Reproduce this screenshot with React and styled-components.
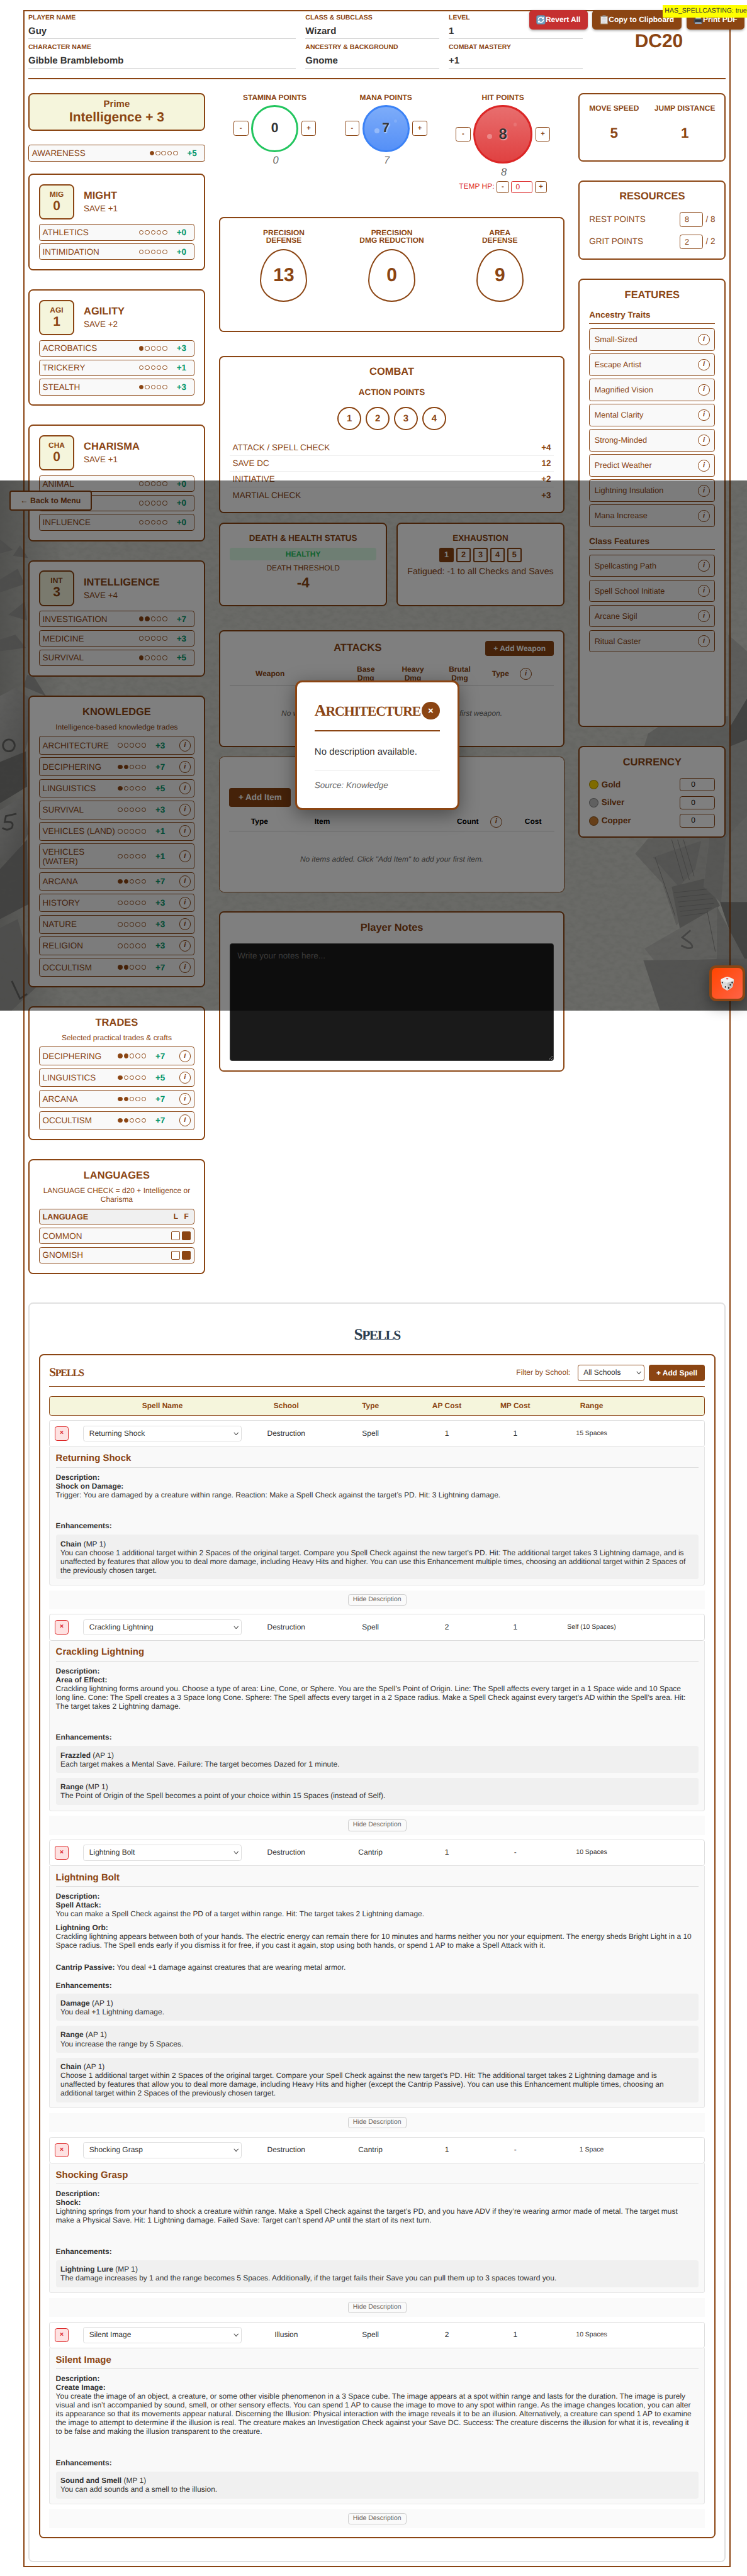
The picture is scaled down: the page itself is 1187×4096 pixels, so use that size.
import React from "react";
import styled, { createGlobalStyle, css } from "styled-components";

const BROWN = "#8b4513";
const B2 = "2.14px";

const Global = createGlobalStyle`
  html, body { margin: 0; padding: 0; background: #fff; }
  *, *::before, *::after { box-sizing: border-box; }
`;

const Page = styled.div`
  position: relative;
  isolation: isolate;
  width: 1268px;
  height: 4374px;
  overflow: hidden;
  zoom: 0.93625;
  font-family: "Liberation Sans", Arial, Helvetica, sans-serif;
  color: ${BROWN};
  font-size: 14.4px;
  line-height: 17px;
  text-rendering: geometricPrecision;
  button, textarea { text-rendering: geometricPrecision; }
`;

const Frame = styled.main`
  position: relative;
  width: 1200px;
  height: 4342.5px;
  margin: 17.4px 0 0 40px;
  padding: 5px 6px 6px;
  border: ${B2} solid ${BROWN};
`;

/* ---------- header ---------- */
const Header = styled.header`
  display: grid;
  grid-template-columns: 2fr 1fr 1fr 1fr;
  gap: 16px;
  height: 109.6px;
  padding-bottom: 15.5px;
  border-bottom: ${B2} solid ${BROWN};
`;
const FieldStack = styled.div`
  display: flex;
  flex-direction: column;
  gap: 8px;
`;
const Field = styled.div`
  height: 42px;
  border-bottom: 1px solid #ccc;
`;
const FieldLabel = styled.div`
  font-size: 11.2px;
  font-weight: 700;
  line-height: 13px;
  margin-bottom: 4px;
`;
const FieldValue = styled.div`
  font-size: 16px;
  font-weight: 700;
  line-height: 24px;
  color: #333;
`;
const Brand = styled.div`
  display: flex;
  align-items: center;
  justify-content: center;
  font-size: 32px;
  font-weight: 700;
`;

/* ---------- shared ---------- */
const Columns = styled.div`
  display: flex;
  align-items: flex-start;
  gap: 24px;
  height: 2005.7px;
  margin-top: 24px;
`;
const LeftColumn = styled.div`
  width: 300px;
  display: flex;
  flex-direction: column;
  gap: 32px;
`;
const MiddleColumn = styled.div`
  width: 586px;
  display: flex;
  flex-direction: column;
`;
const RightColumn = styled.div`
  width: 250px;
  display: flex;
  flex-direction: column;
  gap: 32px;
`;
const Card = styled.section`
  width: ${(p) => p.$w || "100%"};
  height: ${(p) => p.$h || "auto"};
  margin-top: ${(p) => p.$mt || "0"};
  padding: 15.86px;
  border: ${(p) => (p.$thin ? "1px" : B2)} solid ${BROWN};
  border-radius: 8px;
  background: #fff;
`;
const Title = styled.h3`
  margin: 0;
  font-size: 17.6px;
  font-weight: 700;
  line-height: 20px;
  text-align: center;
`;
const Subtitle = styled.p`
  margin: 8px 0;
  font-size: 12.8px;
  line-height: 15px;
  text-align: center;
`;

/* ---------- left column ---------- */
const Prime = styled.div`
  height: 64px;
  border: ${B2} solid ${BROWN};
  border-radius: 8px;
  background: #f5f5dc;
  text-align: center;
  font-weight: 700;
  padding-top: 7.4px;
`;
const PrimeLabel = styled.div`
  font-size: 16px;
  line-height: 19px;
`;
const PrimeValue = styled.div`
  font-size: 22.4px;
  line-height: 25px;
`;
const LeftTop = styled.div`
  display: flex;
  flex-direction: column;
  gap: 24px;
  margin-bottom: -11.5px;
`;
const SkillList = styled.div`
  display: flex;
  flex-direction: column;
  gap: 4.8px;
  margin-top: ${(p) => p.$mt || "0"};
`;
const SkillRow = styled.div`
  display: flex;
  align-items: center;
  min-height: 28.1px;
  padding: 4.8px 5px;
  border: 1px solid ${BROWN};
  border-radius: 4px;
  background: #f9f9f9;
`;
const SkillName = styled.span`
  flex: 1;
  min-width: 0;
  line-height: 16px;
  white-space: pre;
`;
const Dots = styled.span`
  display: flex;
  flex: none;
  gap: 2px;
  width: 48px;
  margin-right: 8px;
`;
const Dot = styled.i`
  width: 8px;
  height: 8px;
  border: 1px solid ${BROWN};
  border-radius: 50%;
  background: ${(p) => (p.$on ? BROWN : "#fff")};
`;
const Bonus = styled.span`
  flex: none;
  width: 32px;
  text-align: center;
  font-weight: 700;
  line-height: 16px;
  color: #059669;
  margin-right: ${(p) => (p.$info ? "16px" : "0")};
`;
const InfoCircle = styled.span`
  display: flex;
  align-items: center;
  justify-content: center;
  flex: none;
  width: 20px;
  height: 20px;
  border: 1px solid ${BROWN};
  border-radius: 50%;
  background: #fff;
  font-size: 12px;
  font-weight: 700;
  font-style: italic;
  line-height: 1;
`;
const AttrHead = styled.div`
  display: flex;
  align-items: center;
  gap: 16px;
  height: 60px;
`;
const AttrBox = styled.div`
  width: 60px;
  height: 60px;
  padding-top: 7.4px;
  border: ${B2} solid ${BROWN};
  border-radius: 8px;
  background: #f5f5dc;
  text-align: center;
  font-weight: 700;
`;
const AttrShort = styled.div`
  font-size: 12.8px;
  line-height: 15px;
`;
const AttrScore = styled.div`
  font-size: 22.4px;
  line-height: 26px;
`;
const AttrName = styled.div`
  font-size: 17.6px;
  font-weight: 700;
  line-height: 20px;
  margin-bottom: 3.5px;
`;
const LangHead = styled(SkillRow)`
  min-height: 27.2px;
  height: 27.2px;
  background: #f0f0f0;
  font-weight: 700;
  font-size: 13.6px;
`;
const LangMark = styled.span`
  width: 15px;
  margin-left: 3px;
  text-align: center;
  font-size: 12.8px;
`;
const LangBox = styled.i`
  width: 15px;
  height: 15px;
  margin-left: 3px;
  border: 1px solid ${BROWN};
  border-radius: 2px;
  background: ${(p) => (p.$on ? BROWN : "#fff")};
`;

/* ---------- middle column ---------- */
const Pools = styled.div`
  display: flex;
  justify-content: space-around;
  height: 178px;
`;
const Pool = styled.div`
  display: flex;
  flex-direction: column;
  align-items: center;
`;
const PoolLabel = styled.div`
  font-size: 12.8px;
  font-weight: 700;
  line-height: 15px;
  margin-bottom: 5px;
`;
const PoolRow = styled.div`
  display: flex;
  align-items: center;
  gap: 4.9px;
`;
const StepButton = styled.button`
  display: flex;
  align-items: center;
  justify-content: center;
  width: ${(p) => (p.$small ? "20.4px" : "25.3px")};
  height: ${(p) => (p.$small ? "20.4px" : "25.3px")};
  padding: 0;
  border: 1px solid ${BROWN};
  border-radius: 3.5px;
  background: #fff;
  color: ${BROWN};
  font: 700 12px/1 "Liberation Sans", Arial, sans-serif;
`;
const Orb = styled.div`
  position: relative;
  display: flex;
  align-items: center;
  justify-content: center;
  width: ${(p) => p.$size}px;
  height: ${(p) => p.$size}px;
  border: 3.21px solid ${(p) => p.$line};
  border-radius: 50%;
  background: ${(p) => p.$fill};
  color: #333;
  font-size: ${(p) => (p.$size === 100 ? 25.6 : 22.4)}px;
  font-weight: 700;
  text-shadow: ${(p) => (p.$fill === "#fff" ? "none" : "1px 1px 2px rgba(255,255,255,0.8)")};
`;
const Bubble = styled.i`
  position: absolute;
  left: ${(p) => p.$x}%;
  top: ${(p) => p.$y}%;
  width: ${(p) => p.$d}px;
  height: ${(p) => p.$d}px;
  border-radius: 50%;
  background: rgba(255, 255, 255, ${(p) => p.$a});
`;
const PoolMax = styled.div`
  margin: 4.5px 0 4.5px 3px;
  font-size: 17.6px;
  font-style: italic;
  line-height: 20px;
  color: #666;
`;
const TempRow = styled.div`
  display: flex;
  align-items: center;
  gap: 4.2px;
  font-size: 12.8px;
  color: #dc2626;
`;
const TempInput = styled.span`
  width: 36px;
  height: 21px;
  padding-left: 6.5px;
  border: 1px solid #dc2626;
  border-radius: 3px;
  font-size: 12.8px;
  line-height: 19px;
`;
const DefenseGrid = styled.div`
  display: grid;
  grid-template-columns: repeat(3, 1fr);
  justify-items: center;
  padding-top: 3px;
`;
const DefenseLabel = styled.div`
  font-size: 12.8px;
  font-weight: 700;
  line-height: 13px;
  text-align: center;
  white-space: pre;
`;
const Egg = styled.div`
  display: flex;
  align-items: center;
  justify-content: center;
  width: 80px;
  height: 90px;
  margin: 8px auto 0;
  border: ${B2} solid ${BROWN};
  border-radius: 50% 50% 50% 50% / 60% 60% 40% 40%;
  font-size: 32px;
  font-weight: 700;
`;
const ActionTitle = styled.div`
  margin: 16px 0;
  font-weight: 700;
  text-align: center;
`;
const ActionRow = styled.div`
  display: flex;
  justify-content: center;
  gap: 8px;
  margin-bottom: 16px;
`;
const ActionPoint = styled.span`
  display: flex;
  align-items: center;
  justify-content: center;
  width: 40px;
  height: 40px;
  border: ${B2} solid ${BROWN};
  border-radius: 50%;
  font-size: 16px;
  font-weight: 700;
`;
const StatLine = styled.div`
  display: flex;
  justify-content: space-between;
  align-items: center;
  height: 27.1px;
  padding: 0 4.8px;
  border-bottom: 1px solid #eee;
  &:last-child { border-bottom: 0; }
`;
const Strong = styled.b`
  font-weight: 700;
`;
const Pair = styled.div`
  display: flex;
  gap: 16px;
  margin-top: 16px;
`;
const SmallTitle = styled.h4`
  margin: 0;
  font-size: 14.4px;
  font-weight: 700;
  line-height: 17px;
  text-align: center;
`;
const Healthy = styled.div`
  height: 22px;
  margin: 7px 0 5px;
  border-radius: 4px;
  background: #dcfce7;
  color: #22c55e;
  font-size: 12.8px;
  font-weight: 700;
  line-height: 22px;
  text-align: center;
`;
const Threshold = styled.div`
  font-size: 12.8px;
  line-height: 15px;
  text-align: center;
`;
const ThresholdValue = styled.div`
  font-size: 24px;
  font-weight: 700;
  line-height: 36px;
  text-align: center;
`;
const ExhaustRow = styled.div`
  display: flex;
  justify-content: center;
  gap: 4.8px;
  margin: 7.5px 0 9px;
`;
const ExhaustBox = styled.span`
  width: 24px;
  height: 24px;
  border: ${B2} solid ${BROWN};
  border-radius: 3px;
  background: ${(p) => (p.$on ? BROWN : "#fff")};
  color: ${(p) => (p.$on ? "#fff" : BROWN)};
  font-size: 13.6px;
  font-weight: 700;
  line-height: 20px;
  text-align: center;
`;
const ExhaustNote = styled.div`
  display: flex;
  justify-content: center;
  font-size: 15.2px;
  line-height: 17px;
  white-space: nowrap;
`;
const SolidButton = styled.button`
  display: block;
  height: ${(p) => p.$h}px;
  width: ${(p) => p.$w}px;
  margin: ${(p) => p.$mt || 0}px 0 0;
  padding: 0;
  border: 0;
  border-radius: 4px;
  background: ${BROWN};
  color: #fff;
  font: 700 ${(p) => p.$fs || 12.8}px/1 "Liberation Sans", Arial, sans-serif;
  white-space: nowrap;
`;
const AttackHead = styled.div`
  display: flex;
  align-items: center;
  & > h3 { flex: 1; }
`;
const TableHead = styled.div`
  display: flex;
  align-items: center;
  height: ${(p) => p.$h}px;
  margin-top: ${(p) => p.$mt}px;
  border-bottom: 1px solid #ccc;
  color: ${(p) => p.$color || BROWN};
  font-size: 12.8px;
  font-weight: 700;
  line-height: 14px;
`;
const HeadCell = styled.span`
  display: flex;
  justify-content: center;
  width: ${(p) => p.$w}px;
  margin-left: ${(p) => p.$ml || 0}px;
  color: ${(p) => p.$c || "inherit"};
  white-space: pre;
  text-align: center;
`;
const Empty = styled.p`
  margin: ${(p) => p.$mt}px 0 0;
  color: #666;
  font-size: 12.8px;
  font-style: italic;
  line-height: 16px;
  text-align: center;
`;
const Notes = styled.textarea`
  display: block;
  width: 100%;
  height: 200px;
  margin-top: 16px;
  padding: 12px;
  border: 1px solid #444;
  border-radius: 4px;
  background: #1a1a1a;
  color: #fff;
  font: 14.4px/17px "Liberation Sans", Arial, sans-serif;
  &::placeholder { color: #757575; }
`;

/* ---------- right column ---------- */
const SpeedRow = styled.div`
  display: flex;
  justify-content: space-between;
`;
const Speed = styled.div`
  text-align: center;
  font-size: 12.8px;
  font-weight: 700;
  line-height: 15px;
`;
const SpeedValue = styled.div`
  margin-top: 21px;
  font-size: 24px;
  line-height: 28px;
`;
const ResourceLine = styled.div`
  display: flex;
  align-items: center;
  height: 25px;
  margin-top: ${(p) => p.$mt}px;
`;
const Grow = styled.span`
  flex: 1;
`;
const NumberBox = styled.span`
  width: ${(p) => p.$w}px;
  height: ${(p) => p.$h}px;
  padding-left: ${(p) => p.$pl}px;
  border: 1px solid ${BROWN};
  border-radius: 4px;
  background: #fff;
  color: ${(p) => p.$c || BROWN};
  font-size: ${(p) => p.$fs || 13.6}px;
  font-weight: 400;
  line-height: ${(p) => p.$h - 2}px;
`;
const Max = styled.span`
  margin-left: 4.8px;
  white-space: pre;
`;
const GroupTitle = styled.h4`
  margin: 16px 0 8px;
  padding-bottom: 4.6px;
  border-bottom: 1px solid ${BROWN};
  font-size: 14.4px;
  font-weight: 700;
  line-height: 17px;
`;
const FeatureList = styled.div`
  display: flex;
  flex-direction: column;
  gap: 4.8px;
`;
const Feature = styled.div`
  display: flex;
  align-items: center;
  justify-content: space-between;
  height: 38px;
  padding: 0 8px;
  border: 1px solid ${BROWN};
  border-radius: 4px;
  background: #f9f9f9;
  font-size: 13.6px;
`;
const CoinRow = styled.div`
  display: flex;
  align-items: center;
  height: 23px;
  margin-top: ${(p) => p.$mt}px;
  font-weight: 700;
`;
const Coin = styled.i`
  width: 16px;
  height: 16px;
  margin-right: 4.8px;
  border: 1px solid rgba(0, 0, 0, 0.3);
  border-radius: 50%;
  background: ${(p) => p.$c};
`;

/* ---------- spells ---------- */
const SpellsPanel = styled.section`
  height: 2139px;
  margin-top: 48.4px;
  padding: 39px 15.6px 0;
  border: ${B2} solid #e0e0e0;
  border-radius: 8px;
`;
const Caps = styled.h2`
  margin: 0;
  height: ${(p) => p.$lh}px;
  font-family: "Liberation Serif", "Times New Roman", serif;
  font-weight: 700;
  text-transform: uppercase;
  color: ${(p) => p.$c};
  font-size: ${(p) => p.$fs}px;
  letter-spacing: ${(p) => p.$ls}px;
  line-height: ${(p) => p.$lh}px;
  text-align: ${(p) => p.$align || "left"};
  white-space: nowrap;
  &::first-letter { font-size: 1.18em; }
`;
const SpellsCard = styled.div`
  height: 2011.6px;
  margin-top: 20px;
  padding: 16px 15.6px;
  border: ${B2} solid ${BROWN};
  border-radius: 8px;
`;
const SpellsBar = styled.div`
  display: flex;
  align-items: center;
  height: 37.8px;
  padding-bottom: 8px;
  border-bottom: 1px solid ${BROWN};
`;
const FilterLabel = styled.span`
  margin-left: auto;
  margin-right: 12.4px;
  font-size: 12.8px;
`;
const SelectBox = styled.span`
  display: flex;
  align-items: center;
  justify-content: space-between;
  width: ${(p) => p.$w};
  height: ${(p) => p.$h}px;
  padding: 0 3.5px 0 9px;
  border: 1px solid ${(p) => p.$line};
  border-radius: 4px;
  background: #fff;
  color: #333;
  font-size: 12.8px;
  margin-right: ${(p) => p.$mr || 0}px;
`;
const gridColumns = css`
  display: grid;
  grid-template-columns: 40px 2fr 1fr 1fr 0.8fr 0.8fr 1fr 0.8fr;
  column-gap: 8.8px;
  align-items: center;
  padding: 0 8px;
  font-size: 12.8px;
  text-align: center;
`;
const SpellHead = styled.div`
  ${gridColumns}
  height: 33px;
  margin: 16px 0 8px;
  border: 1px solid ${BROWN};
  border-radius: 4px;
  background: #f5f5dc;
  font-weight: 700;
`;
const SpellRow = styled.div`
  ${gridColumns}
  height: 45.2px;
  border: 1px solid #ddd;
  border-radius: 4px;
  background: #fff;
  color: #333;
`;
const Remove = styled.button`
  width: 24px;
  height: 24px;
  padding: 0;
  border: 1px solid #dc2626;
  border-radius: 4px;
  background: #fee2e2;
  color: #dc2626;
  font: 700 11.2px/1 "Liberation Sans", Arial, sans-serif;
`;
const Small = styled.span`
  font-size: 11.2px;
`;
const SpellBody = styled.div`
  padding: 11.2px 10px 9.2px;
  border: 1px solid #e5e5e5;
  border-top: 0;
  border-radius: 0 0 4px 4px;
  background: #f9f9f9;
  color: #333;
  font-size: 12.8px;
  line-height: 15px;
`;
const SpellTitle = styled.h4`
  margin: 0 0 8.4px;
  padding-bottom: 5px;
  border-bottom: 1px solid #ddd;
  color: ${BROWN};
  font-size: 16px;
  line-height: 18px;
`;
const Prose = styled.div`
  margin-right: -8px;
  white-space: pre-line;
`;
const Effects = styled.div`
  display: flex;
  flex-direction: column;
  gap: 8px;
`;
const Passive = styled.div`
  padding-top: 23px;
`;
const EnhTitle = styled.div`
  padding: ${(p) => (p.$afterPassive ? 15 : 38)}px 0 7.3px;
  font-weight: 700;
`;
const Enhancement = styled.div`
  margin-top: ${(p) => (p.$first ? 0 : 8)}px;
  padding: 8px;
  border-radius: 4px;
  background: #f0f0f0;
`;
const HideBar = styled.div`
  display: flex;
  align-items: center;
  justify-content: center;
  height: 32.4px;
  margin: 8.2px 0 8px;
  background: #fafafa;
`;
const HideButton = styled.button`
  width: 99.6px;
  height: 19.6px;
  padding: 0;
  border: 1px solid #ccc;
  border-radius: 4px;
  background: #fafafa;
  color: #666;
  font: 11.2px/1 "Liberation Sans", Arial, sans-serif;
`;

/* ---------- floating layers ---------- */
const Backdrop = styled.svg`
  position: absolute;
  left: 0;
  top: 816px;
  z-index: -1;
`;
const Overlay = styled.div`
  position: absolute;
  left: 0;
  top: 816px;
  width: 1268px;
  height: 900px;
  background: rgba(0, 0, 0, 0.5);
`;
const BackButton = styled.button`
  position: absolute;
  left: 16px;
  top: 833px;
  width: 139.7px;
  height: 34px;
  border: ${B2} solid ${BROWN};
  border-radius: 4px;
  background: #fff;
  color: ${BROWN};
  font: 700 13.2px/1 "Liberation Sans", Arial, sans-serif;
  white-space: nowrap;
  padding: 0;
`;
const Modal = styled.div`
  position: absolute;
  left: 500.7px;
  top: 1156px;
  width: 278.6px;
  height: 219.7px;
  padding: 30px;
  border: 3.21px solid ${BROWN};
  border-radius: 12px;
  background: #fff;
  box-shadow: 0 8px 32px rgba(0, 0, 0, 0.4);
`;
const ModalHead = styled.div`
  display: flex;
  align-items: center;
  justify-content: space-between;
  height: 53px;
  padding: 0 0 15px;
  border-bottom: ${B2} solid ${BROWN};
`;
const Close = styled.button`
  display: flex;
  align-items: center;
  justify-content: center;
  flex: none;
  width: 30px;
  height: 30px;
  padding: 0;
  border: 0;
  border-radius: 50%;
  background: ${BROWN};
  color: #fff;
  font: 700 16px/1 "Liberation Sans", Arial, sans-serif;
`;
const ModalText = styled.p`
  margin: 26px 0 0;
  padding-bottom: 20px;
  border-bottom: 1px solid #eee;
  color: #333;
  font-size: 16px;
  line-height: 20px;
`;
const ModalSource = styled.p`
  margin: 16px 0 0;
  color: #666;
  font-style: italic;
`;
const DiceButton = styled.button`
  position: absolute;
  left: 1204.2px;
  top: 1640px;
  display: flex;
  align-items: center;
  justify-content: center;
  width: 60px;
  height: 60px;
  padding: 0;
  border: 4.28px solid ${BROWN};
  border-radius: 12px;
  background: linear-gradient(135deg, #ff4500, #ff6347);
  box-shadow: 0 8px 24px rgba(0, 0, 0, 0.4);
`;
const Actions = styled.div`
  position: absolute;
  top: 17px;
  left: 897.8px;
  display: flex;
  gap: 8px;
`;
const ActionButton = styled.button`
  display: flex;
  align-items: center;
  justify-content: center;
  width: ${(p) => p.$w}px;
  height: 33px;
  padding: 0;
  border: 0;
  border-radius: 6px;
  background: ${(p) => p.$bg};
  color: #fff;
  font: 700 12.8px/1 "Liberation Sans", Arial, sans-serif;
  white-space: nowrap;
  box-shadow: 0 2px 4px rgba(0, 0, 0, 0.3);
`;
const Debug = styled.div`
  position: absolute;
  left: 1124.3px;
  top: 9px;
  width: 150px;
  height: 21px;
  padding-left: 4px;
  background: #ff0;
  color: #333;
  font-size: 11.2px;
  line-height: 21px;
  white-space: nowrap;
`;

/* ---------- icons ---------- */
const Chevron = () => (
  <svg width="9" height="6" viewBox="0 0 9 6" fill="none" stroke="#444" strokeWidth="1.1">
    <path d="M0.8 0.8 L4.5 5 L8.2 0.8" />
  </svg>
);
const RefreshIcon = () => (
  <svg width="16" height="16" viewBox="0 0 16 16">
    <rect x="0.5" y="0.5" width="15" height="15" rx="3" fill="#6f9fc0" stroke="#5d7f98" strokeWidth="0.6" />
    <path d="M3.6 8a4.4 4.4 0 0 1 7.6-3M12.4 8a4.4 4.4 0 0 1-7.6 3" fill="none" stroke="#fff" strokeWidth="1.7" />
    <path d="M12.9 2.6v4H9zM3.1 13.4v-4H7z" fill="#fff" />
  </svg>
);
const ClipboardIcon = () => (
  <svg width="15" height="16" viewBox="0 0 15 16">
    <rect x="1" y="1.5" width="13" height="14" rx="1" fill="#a98d6b" />
    <rect x="2.2" y="2.8" width="10.6" height="11.6" fill="#e9e9ea" />
    <rect x="4.5" y="0.4" width="6" height="3" rx="1" fill="#9a9da0" />
    <path d="M4 6h7M4 8h7M4 10h7M4 12h5" stroke="#c3c5c9" strokeWidth="0.7" />
  </svg>
);
const PrinterIcon = () => (
  <svg width="16" height="16" viewBox="0 0 16 16">
    <rect x="3.5" y="1" width="9" height="6" fill="#dfe3e8" />
    <path d="M1.5 6h13l1 4v3h-15v-3z" fill="#4b4e54" />
    <rect x="2.5" y="9" width="11" height="2" fill="#23262b" />
    <path d="M3 12h10l1 3H2z" fill="#8ea2b8" />
  </svg>
);
const DiceIcon = () => (
  <svg width="25" height="25" viewBox="0 0 25 25">
    <path d="M12.5 1 Q14 1 22 4.5 Q24 5.5 23.6 8 L21.5 18 Q21 20 13.5 24 Q12.5 24.5 11.4 24 Q4.4 20.5 3.6 18 L1.4 8 Q1 5.5 3 4.5 Q11 1 12.5 1Z" fill="#f1f1f1" />
    <path d="M1.4 7.4 L12.4 11.4 L12.4 24.3 Q4.4 20.5 3.6 18Z" fill="#dcdcdc" />
    <path d="M12.4 11.4 L23.6 7.4 L21.5 18 Q21 20 12.4 24.3Z" fill="#c3c3c3" />
    <ellipse cx="12.4" cy="4.6" rx="2" ry="1.2" fill="#e8413c" />
    <g fill="#222">
      <ellipse cx="4" cy="11" rx="1" ry="1.5" />
      <ellipse cx="9.2" cy="18.5" rx="1" ry="1.5" />
      <ellipse cx="20.8" cy="11" rx="1.2" ry="1.5" />
      <ellipse cx="17.6" cy="15" rx="1.2" ry="1.5" />
      <ellipse cx="14.9" cy="20" rx="1.2" ry="1.5" />
    </g>
  </svg>
);

const Scenery = () => (
  <Backdrop width="1268" height="900" viewBox="0 0 1268 900">
    <defs>
      <filter id="fibre" x="0" y="0" width="100%" height="100%">
        <feTurbulence type="fractalNoise" baseFrequency="0.09 0.14" numOctaves="4" seed="7" />
        <feColorMatrix values="0 0 0 0 0.3  0 0 0 0 0.3  0 0 0 0 0.28  0.6 0 0 0 -0.22" />
      </filter>
      <linearGradient id="shadeLeft" x1="0" x2="1" y1="0" y2="0">
        <stop offset="0" stopColor="#6d6d6b" stopOpacity="0.45" />
        <stop offset="1" stopColor="#6d6d6b" stopOpacity="0" />
      </linearGradient>
      <linearGradient id="face" x1="0" x2="1" y1="0" y2="1">
        <stop offset="0" stopColor="#c0c0bd" />
        <stop offset="1" stopColor="#8f8f8d" />
      </linearGradient>
    </defs>
    <rect width="1268" height="900" fill="#d4d5ce" />
    <rect width="110" height="900" fill="url(#shadeLeft)" />
    <g fill="#9c9c99">
      <path d="M0 100 L22 118 L0 124Z M22 128 L34 110 L48 132Z M0 168 L30 150 L42 176 L0 190Z" />
      <path d="M14 228 L42 206 L46 238Z M0 270 L26 262 L44 284 L0 290Z M46 330 L58 334 L78 366 L40 350Z" />
    </g>
    <path d="M0 366 L26 352 L60 376 L48 440 L30 500 L0 516Z" fill="url(#face)" />
    <path d="M0 478 L44 460 L46 520 L0 548Z" fill="#7a7a78" />
    <path d="M0 560 L40 536 L48 600 L18 650 L0 640Z" fill="url(#face)" />
    <path d="M0 660 L46 610 L48 720 L0 745Z" fill="#848482" />
    <path d="M0 760 L30 745 L62 860 L20 900 L0 900Z" fill="#9d9d9a" />
    <g fill="none" stroke="#646462" strokeWidth="3">
      <ellipse cx="15" cy="450" rx="10" ry="10" />
      <path d="M28 566 L10 570 L8 580 Q26 578 20 590 Q12 596 4 590" />
      <path d="M20 850 L34 880 L46 872" />
    </g>
    <g opacity="0.75">
      <path d="M1130 410 L1238 400 L1268 420 L1268 610 L1108 610 L1092 456 L1100 430Z" fill="#a9a9a6" />
      <path d="M1236 262 L1268 290 L1268 420 L1236 420Z" fill="#b3b3b0" />
      <path d="M1238 420 L1268 370 L1268 440 L1238 452Z" fill="#6a6a69" />
      <path d="M1078 634 L1100 608 L1204 606 L1194 690 L1148 756 L1124 684Z" fill="#b0b0ac" />
      <path d="M1108 640 L1190 612 L1180 660 L1152 690Z" fill="#9c9c9a" />
      <path d="M1140 690 L1196 676 L1222 722 L1156 772Z" fill="#8e8e8c" />
      <path d="M1204 606 L1268 600 L1268 716 L1222 716 L1194 690Z" fill="#a3a3a0" />
      <path d="M1232 606 L1268 570 L1268 720 L1224 716Z" fill="#b5b5b1" />
      <path d="M1222 716 L1268 716 L1268 860 L1250 800Z" fill="#6c6c6b" />
      <path d="M1094 795 L1217 724 L1216 812 L1110 815Z" fill="#bbbbb7" />
      <path d="M1217 724 L1268 820 L1216 830Z" fill="#a6a6a3" />
      <path d="M1092 815 L1268 812 L1268 900 L1120 900Z" fill="#989896" />
    </g>
    <path d="M1172 764 L1158 776 L1172 786 Q1180 796 1166 794 L1156 790" fill="none" stroke="#8a8a88" strokeWidth="3" />
    <g stroke="#858583" strokeWidth="1">
      <path d="M1140 610 L1160 680 M1150 610 L1170 678 M1160 610 L1178 672 M1112 640 L1146 740 M1200 730 L1214 800" />
      <path d="M1144 700 L1200 694 M1147 708 L1206 702 M1150 716 L1210 710 M1152 724 L1212 718 M1154 732 L1208 726 M1155 740 L1200 734" />
    </g>
    <rect width="1268" height="900" filter="url(#fibre)" opacity="0.6" />
  </Backdrop>
);

/* ---------- data ---------- */
const attributes = [
  { short: "MIG", score: 0, name: "MIGHT", save: "+1", skills: [["ATHLETICS", 0, "+0"], ["INTIMIDATION", 0, "+0"]] },
  { short: "AGI", score: 1, name: "AGILITY", save: "+2", skills: [["ACROBATICS", 1, "+3"], ["TRICKERY", 0, "+1"], ["STEALTH", 1, "+3"]] },
  { short: "CHA", score: 0, name: "CHARISMA", save: "+1", skills: [["ANIMAL", 0, "+0"], ["", 0, "+0"], ["INFLUENCE", 0, "+0"]] },
  { short: "INT", score: 3, name: "INTELLIGENCE", save: "+4", skills: [["INVESTIGATION", 2, "+7"], ["MEDICINE", 0, "+3"], ["SURVIVAL", 1, "+5"]] },
];
const knowledge = [
  ["ARCHITECTURE", 0, "+3"], ["DECIPHERING", 2, "+7"], ["LINGUISTICS", 1, "+5"], ["SURVIVAL", 0, "+3"],
  ["VEHICLES (LAND)", 0, "+1"], ["VEHICLES\n(WATER)", 0, "+1"], ["ARCANA", 2, "+7"], ["HISTORY", 0, "+3"],
  ["NATURE", 0, "+3"], ["RELIGION", 0, "+3"], ["OCCULTISM", 2, "+7"],
];
const trades = [["DECIPHERING", 2, "+7"], ["LINGUISTICS", 1, "+5"], ["ARCANA", 2, "+7"], ["OCCULTISM", 2, "+7"]];
const traits = ["Small-Sized", "Escape Artist", "Magnified Vision", "Mental Clarity", "Strong-Minded", "Predict Weather", "Lightning Insulation", "Mana Increase"];
const classFeatures = ["Spellcasting Path", "Spell School Initiate", "Arcane Sigil", "Ritual Caster"];
const spells = [
  {
    name: "Returning Shock", school: "Destruction", type: "Spell", ap: "1", mp: "1", range: "15 Spaces",
    effects: [["Shock on Damage:", "Trigger: You are damaged by a creature within range. Reaction: Make a Spell Check against the target’s PD. Hit: 3 Lightning damage."]],
    enh: [["Chain", "(MP 1)", "You can choose 1 additional target within 2 Spaces of the original target. Compare you Spell Check against the new target’s PD. Hit: The additional target takes 3 Lightning damage, and is\nunaffected by features that allow you to deal more damage, including Heavy Hits and higher. You can use this Enhancement multiple times, choosing an additional target within 2 Spaces of\nthe previously chosen target."]],
  },
  {
    name: "Crackling Lightning", school: "Destruction", type: "Spell", ap: "2", mp: "1", range: "Self (10 Spaces)",
    effects: [["Area of Effect:", "Crackling lightning forms around you. Choose a type of area: Line, Cone, or Sphere. You are the Spell’s Point of Origin. Line: The Spell affects every target in a 1 Space wide and 10 Space\nlong line. Cone: The Spell creates a 3 Space long Cone. Sphere: The Spell affects every target in a 2 Space radius. Make a Spell Check against every target’s AD within the Spell’s area. Hit:\nThe target takes 2 Lightning damage."]],
    enh: [
      ["Frazzled", "(AP 1)", "Each target makes a Mental Save. Failure: The target becomes Dazed for 1 minute."],
      ["Range", "(MP 1)", "The Point of Origin of the Spell becomes a point of your choice within 15 Spaces (instead of Self)."],
    ],
  },
  {
    name: "Lightning Bolt", school: "Destruction", type: "Cantrip", ap: "1", mp: "-", range: "10 Spaces",
    effects: [
      ["Spell Attack:", "You can make a Spell Check against the PD of a target within range. Hit: The target takes 2 Lightning damage."],
      ["Lightning Orb:", "Crackling lightning appears between both of your hands. The electric energy can remain there for 10 minutes and harms neither you nor your equipment. The energy sheds Bright Light in a 10\nSpace radius. The Spell ends early if you dismiss it for free, if you cast it again, stop using both hands, or spend 1 AP to make a Spell Attack with it."],
    ],
    passive: "You deal +1 damage against creatures that are wearing metal armor.",
    enh: [
      ["Damage", "(AP 1)", "You deal +1 Lightning damage."],
      ["Range", "(AP 1)", "You increase the range by 5 Spaces."],
      ["Chain", "(AP 1)", "Choose 1 additional target within 2 Spaces of the original target. Compare your Spell Check against the new target’s PD. Hit: The additional target takes 2 Lightning damage and is\nunaffected by features that allow you to deal more damage, including Heavy Hits and higher (except the Cantrip Passive). You can use this Enhancement multiple times, choosing an\nadditional target within 2 Spaces of the previously chosen target."],
    ],
  },
  {
    name: "Shocking Grasp", school: "Destruction", type: "Cantrip", ap: "1", mp: "-", range: "1 Space",
    effects: [["Shock:", "Lightning springs from your hand to shock a creature within range. Make a Spell Check against the target’s PD, and you have ADV if they’re wearing armor made of metal. The target must\nmake a Physical Save. Hit: 1 Lightning damage. Failed Save: Target can’t spend AP until the start of its next turn."]],
    enh: [["Lightning Lure", "(MP 1)", "The damage increases by 1 and the range becomes 5 Spaces. Additionally, if the target fails their Save you can pull them up to 3 spaces toward you."]],
  },
  {
    name: "Silent Image", school: "Illusion", type: "Spell", ap: "2", mp: "1", range: "10 Spaces",
    effects: [["Create Image:", "You create the image of an object, a creature, or some other visible phenomenon in a 3 Space cube. The image appears at a spot within range and lasts for the duration. The image is purely\nvisual and isn’t accompanied by sound, smell, or other sensory effects. You can spend 1 AP to cause the image to move to any spot within range. As the image changes location, you can alter\nits appearance so that its movements appear natural. Discerning the Illusion: Physical interaction with the image reveals it to be an illusion. Alternatively, a creature can spend 1 AP to examine\nthe image to attempt to determine if the illusion is real. The creature makes an Investigation Check against your Save DC. Success: The creature discerns the illusion for what it is, revealing it\nto be false and making the illusion transparent to the creature."]],
    enh: [["Sound and Smell", "(MP 1)", "You can add sounds and a smell to the illusion."]],
  },
];

/* ---------- pieces ---------- */
const Skill = ({ data: [name, level, bonus], info }) => (
  <SkillRow>
    <SkillName>{name}</SkillName>
    <Dots>{[1, 2, 3, 4, 5].map((n) => <Dot key={n} $on={n <= level} />)}</Dots>
    <Bonus $info={info}>{bonus}</Bonus>
    {info && <InfoCircle>i</InfoCircle>}
  </SkillRow>
);
const HeaderField = ({ label, value }) => (
  <Field>
    <FieldLabel>{label}</FieldLabel>
    <FieldValue>{value}</FieldValue>
  </Field>
);
const FeatureItems = ({ items }) => (
  <FeatureList>
    {items.map((f) => <Feature key={f}>{f}<InfoCircle>i</InfoCircle></Feature>)}
  </FeatureList>
);
const PoolGauge = ({ label, size, line, fill, value, children, extra }) => (
  <Pool>
    <PoolLabel>{label}</PoolLabel>
    <PoolRow>
      <StepButton>-</StepButton>
      <Orb $size={size} $line={line} $fill={fill}>{children}{value}</Orb>
      <StepButton>+</StepButton>
    </PoolRow>
    <PoolMax>{value}</PoolMax>
    {extra}
  </Pool>
);
const Spell = ({ s }) => (
  <>
    <SpellRow>
      <Remove>×</Remove>
      <SelectBox $w="100%" $h={27.2} $line="#ddd">{s.name}<Chevron /></SelectBox>
      <span>{s.school}</span>
      <span>{s.type}</span>
      <span>{s.ap}</span>
      <span>{s.mp}</span>
      <Small>{s.range}</Small>
    </SpellRow>
    <SpellBody>
      <SpellTitle>{s.name}</SpellTitle>
      <Strong>Description:</Strong>
      <Effects>
        {s.effects.map(([t, d]) => <div key={t}><Strong>{t}</Strong><Prose>{d}</Prose></div>)}
      </Effects>
      {s.passive && <Passive><Strong>Cantrip Passive:</Strong> {s.passive}</Passive>}
      <EnhTitle $afterPassive={!!s.passive}>Enhancements:</EnhTitle>
      {s.enh.map(([t, c, d], i) => (
        <Enhancement key={t} $first={i === 0}><Strong>{t}</Strong> {c}<Prose>{d}</Prose></Enhancement>
      ))}
    </SpellBody>
    <HideBar><HideButton>Hide Description</HideButton></HideBar>
  </>
);

export default function App() {
  return (
    <Page>
      <Global />
      <Scenery />
      <Frame>
        <Header>
          <FieldStack>
            <HeaderField label="PLAYER NAME" value="Guy" />
            <HeaderField label="CHARACTER NAME" value="Gibble Bramblebomb" />
          </FieldStack>
          <FieldStack>
            <HeaderField label="CLASS & SUBCLASS" value="Wizard" />
            <HeaderField label="ANCESTRY & BACKGROUND" value="Gnome" />
          </FieldStack>
          <FieldStack>
            <HeaderField label="LEVEL" value="1" />
            <HeaderField label="COMBAT MASTERY" value="+1" />
          </FieldStack>
          <Brand>DC20</Brand>
        </Header>

        <Columns>
          <LeftColumn>
            <LeftTop>
              <Prime>
                <PrimeLabel>Prime</PrimeLabel>
                <PrimeValue>Intelligence + 3</PrimeValue>
              </Prime>
              <Skill data={["AWARENESS", 1, "+5"]} />
            </LeftTop>
            {attributes.map((a) => (
              <Card key={a.short}>
                <AttrHead>
                  <AttrBox>
                    <AttrShort>{a.short}</AttrShort>
                    <AttrScore>{a.score}</AttrScore>
                  </AttrBox>
                  <div>
                    <AttrName>{a.name}</AttrName>
                    <div>SAVE {a.save}</div>
                  </div>
                </AttrHead>
                <SkillList $mt="8px">
                  {a.skills.map((s) => <Skill key={s[0]} data={s} />)}
                </SkillList>
              </Card>
            ))}
            <Card>
              <Title>KNOWLEDGE</Title>
              <Subtitle>Intelligence-based knowledge trades</Subtitle>
              <SkillList>{knowledge.map((s) => <Skill key={s[0]} data={s} info />)}</SkillList>
            </Card>
            <Card>
              <Title>TRADES</Title>
              <Subtitle>Selected practical trades &amp; crafts</Subtitle>
              <SkillList>{trades.map((s) => <Skill key={s[0]} data={s} info />)}</SkillList>
            </Card>
            <Card>
              <Title>LANGUAGES</Title>
              <Subtitle>LANGUAGE CHECK = d20 + Intelligence or Charisma</Subtitle>
              <SkillList>
                <LangHead><SkillName>LANGUAGE</SkillName><LangMark>L</LangMark><LangMark>F</LangMark></LangHead>
                {["COMMON", "GNOMISH"].map((l) => (
                  <SkillRow key={l}><SkillName>{l}</SkillName><LangBox /><LangBox $on /></SkillRow>
                ))}
              </SkillList>
            </Card>
          </LeftColumn>

          <MiddleColumn>
            <Pools>
              <PoolGauge label="STAMINA POINTS" size={80} line="#22c55e" fill="#fff" value="0" />
              <PoolGauge label="MANA POINTS" size={80} line="#3b82f6" fill="linear-gradient(#7dacf9, #5590f7)" value="7">
                <Bubble $x={23} $y={49} $d={9} $a={0.3} />
                <Bubble $x={68} $y={29} $d={6} $a={0.12} />
              </PoolGauge>
              <PoolGauge
                label="HIT POINTS" size={100} line="#dc2626" fill="linear-gradient(#e86e6e, #e04141)" value="8"
                extra={
                  <TempRow>
                    TEMP HP:
                    <StepButton $small>-</StepButton>
                    <TempInput>0</TempInput>
                    <StepButton $small>+</StepButton>
                  </TempRow>
                }
              >
                <Bubble $x={21} $y={49} $d={9} $a={0.3} />
                <Bubble $x={69} $y={29} $d={6} $a={0.12} />
              </PoolGauge>
            </Pools>

            <Card $mt="32px" $h="195.4px">
              <DefenseGrid>
                {[["PRECISION\nDEFENSE", 13], ["PRECISION\nDMG REDUCTION", 0], ["AREA\nDEFENSE", 9]].map(([l, v]) => (
                  <div key={l}><DefenseLabel>{l}</DefenseLabel><Egg>{v}</Egg></div>
                ))}
              </DefenseGrid>
            </Card>

            <Card $mt="40.6px" $h="268px">
              <Title>COMBAT</Title>
              <ActionTitle>ACTION POINTS</ActionTitle>
              <ActionRow>{[1, 2, 3, 4].map((n) => <ActionPoint key={n}>{n}</ActionPoint>)}</ActionRow>
              <div>
                {[["ATTACK / SPELL CHECK", "+4"], ["SAVE DC", "12"], ["INITIATIVE", "+2"], ["MARTIAL CHECK", "+3"]].map(([l, v]) => (
                  <StatLine key={l}><span>{l}</span><Strong>{v}</Strong></StatLine>
                ))}
              </div>
            </Card>

            <Pair>
              <Card $w="285px" $h="142px">
                <SmallTitle>DEATH &amp; HEALTH STATUS</SmallTitle>
                <Healthy>HEALTHY</Healthy>
                <Threshold>DEATH THRESHOLD</Threshold>
                <ThresholdValue>-4</ThresholdValue>
              </Card>
              <Card $w="285px" $h="142px">
                <SmallTitle>EXHAUSTION</SmallTitle>
                <ExhaustRow>{[1, 2, 3, 4, 5].map((n) => <ExhaustBox key={n} $on={n === 1}>{n}</ExhaustBox>)}</ExhaustRow>
                <ExhaustNote>Fatigued: -1 to all Checks and Saves</ExhaustNote>
              </Card>
            </Pair>

            <Card $mt="40px" $h="198.7px">
              <AttackHead>
                <Title>ATTACKS</Title>
                <SolidButton $w={116} $h={26}>+ Add Weapon</SolidButton>
              </AttackHead>
              <TableHead $mt={12} $h={38}>
                <HeadCell $w={137}>Weapon</HeadCell>
                <HeadCell $w={80} $ml={54}>{"Base\nDmg"}</HeadCell>
                <HeadCell $w={79.5}>{"Heavy\nDmg"}</HeadCell>
                <HeadCell $w={79.5}>{"Brutal\nDmg"}</HeadCell>
                <HeadCell $w={59}>Type</HeadCell>
                <HeadCell $w={27}><InfoCircle>i</InfoCircle></HeadCell>
              </TableHead>
              <Empty $mt={40}>No weapons added. Click "Add Weapon" to add your first weapon.</Empty>
            </Card>

            <Card $mt="16.3px" $h="230.7px" $thin>
              <SolidButton $mt={36} $w={105} $h={32} $fs={14.4}>+ Add Item</SolidButton>
              <TableHead $mt={11} $h={31} $color="#000">
                <HeadCell $w={103}>Type</HeadCell>
                <HeadCell $w={110}>Item</HeadCell>
                <HeadCell $w={56} $ml={164}>Count</HeadCell>
                <HeadCell $w={40} $c={BROWN}><InfoCircle>i</InfoCircle></HeadCell>
                <HeadCell $w={68} $ml={9}>Cost</HeadCell>
              </TableHead>
              <Empty $mt={40}>No items added. Click "Add Item" to add your first item.</Empty>
            </Card>

            <Card $mt="32.3px" $h="271.5px">
              <Title>Player Notes</Title>
              <Notes placeholder="Write your notes here..." />
            </Card>
          </MiddleColumn>

          <RightColumn>
            <Card $h="116px">
              <SpeedRow>
                <Speed>MOVE SPEED<SpeedValue>5</SpeedValue></Speed>
                <Speed>JUMP DISTANCE<SpeedValue>1</SpeedValue></Speed>
              </SpeedRow>
            </Card>
            <Card $h="135px">
              <Title>RESOURCES</Title>
              {[["REST POINTS", 8, 16], ["GRIT POINTS", 2, 13]].map(([l, v, mt]) => (
                <ResourceLine key={l} $mt={mt}>
                  <Grow>{l}</Grow>
                  <NumberBox $w={40} $h={25} $pl={8}>{v}</NumberBox>
                  <Max>/ {v}</Max>
                </ResourceLine>
              ))}
            </Card>
            <Card $h="762px">
              <Title>FEATURES</Title>
              <GroupTitle>Ancestry Traits</GroupTitle>
              <FeatureItems items={traits} />
              <GroupTitle>Class Features</GroupTitle>
              <FeatureItems items={classFeatures} />
            </Card>
            <Card $h="155.7px">
              <Title>CURRENCY</Title>
              {[["Gold", "#ffd700", 16], ["Silver", "#c0c0c0", 7.8], ["Copper", "#cd7f32", 7.8]].map(([l, c, mt]) => (
                <CoinRow key={l} $mt={mt}>
                  <Coin $c={c} />
                  <Grow>{l}</Grow>
                  <NumberBox $w={60} $h={23} $pl={18} $c="#000" $fs={12.8}>0</NumberBox>
                </CoinRow>
              ))}
            </Card>
          </RightColumn>
        </Columns>

        <SpellsPanel>
          <Caps $c="#2c3e50" $fs={23} $ls={-1.6} $lh={26} $align="center">Spells</Caps>
          <SpellsCard>
            <SpellsBar>
              <Caps $c={BROWN} $fs={17.3} $ls={-1.3} $lh={24}>Spells</Caps>
              <FilterLabel>Filter by School:</FilterLabel>
              <SelectBox $w="113.4px" $h={28.4} $line={BROWN} $mr={7.4}>All Schools<Chevron /></SelectBox>
              <SolidButton $w={95.4} $h={28.4}>+ Add Spell</SolidButton>
            </SpellsBar>
            <SpellHead>
              <span />
              <span>Spell Name</span>
              <span>School</span>
              <span>Type</span>
              <span>AP Cost</span>
              <span>MP Cost</span>
              <span>Range</span>
            </SpellHead>
            {spells.map((s) => <Spell key={s.name} s={s} />)}
          </SpellsCard>
        </SpellsPanel>
      </Frame>

      <Actions>
        <ActionButton $w={99.6} $bg="#c53030"><RefreshIcon />Revert All</ActionButton>
        <ActionButton $w={151.4} $bg={BROWN}><ClipboardIcon />Copy to Clipboard</ActionButton>
        <ActionButton $w={99} $bg={BROWN}><PrinterIcon />Print PDF</ActionButton>
      </Actions>
      <Debug>HAS_SPELLCASTING: true</Debug>

      <BackButton>← Back to Menu</BackButton>
      <Overlay />
      <Modal>
        <ModalHead>
          <Caps as="h3" $c={BROWN} $fs={23.3} $ls={-1.1} $lh={30}>Architecture</Caps>
          <Close>×</Close>
        </ModalHead>
        <ModalText>No description available.</ModalText>
        <ModalSource>Source: Knowledge</ModalSource>
      </Modal>
      <DiceButton><DiceIcon /></DiceButton>
    </Page>
  );
}
